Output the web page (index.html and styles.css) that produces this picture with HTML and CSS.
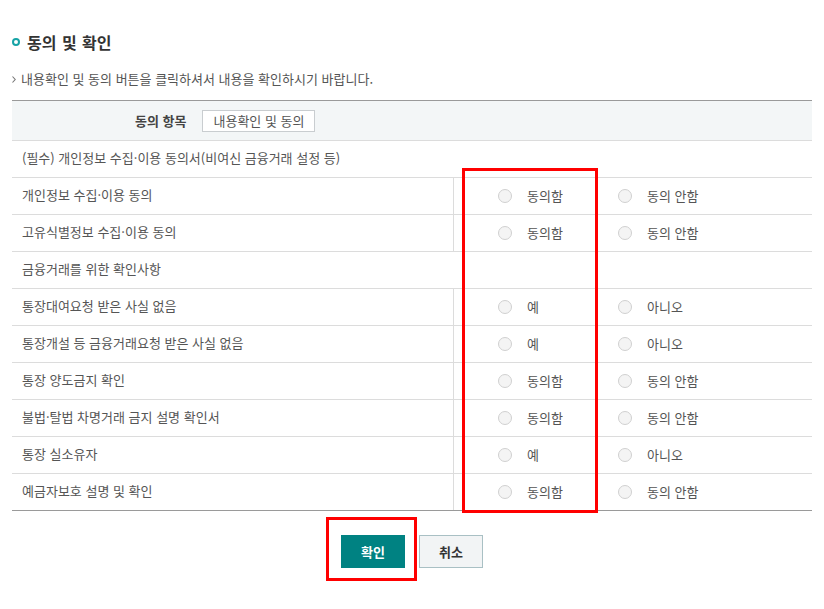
FILE: index.html
```html
<!DOCTYPE html>
<html lang="ko">
<head>
<meta charset="utf-8">
<title>동의 및 확인</title>
<link rel="stylesheet" href="styles.css">
</head>
<body>
<div class="page">
  <h2 class="title"><span class="bullet"></span>동의 및 확인</h2>
  <p class="desc"><svg class="arrow" width="4" height="7" viewBox="0 0 4 7"><path d="M0.5 0.5 L3.2 3.5 L0.5 6.5" fill="none" stroke="#777" stroke-width="1.1"/></svg>내용확인 및 동의 버튼을 클릭하셔서 내용을 확인하시기 바랍니다.</p>

  <div class="table">
    <div class="head">
      <span class="head-label">동의 항목</span>
      <button class="head-btn" type="button">내용확인 및 동의</button>
    </div>
    <div class="row"><div class="cell-full">(필수) 개인정보 수집·이용 동의서(비여신 금융거래 설정 등)</div></div>
    <div class="row">
      <div class="cell-label">개인정보 수집·이용 동의</div>
      <div class="cell-opts"><span class="opt"><span class="radio"></span>동의함</span><span class="opt"><span class="radio"></span>동의 안함</span></div>
    </div>
    <div class="row">
      <div class="cell-label">고유식별정보 수집·이용 동의</div>
      <div class="cell-opts"><span class="opt"><span class="radio"></span>동의함</span><span class="opt"><span class="radio"></span>동의 안함</span></div>
    </div>
    <div class="row"><div class="cell-full">금융거래를 위한 확인사항</div></div>
    <div class="row">
      <div class="cell-label">통장대여요청 받은 사실 없음</div>
      <div class="cell-opts"><span class="opt"><span class="radio"></span>예</span><span class="opt"><span class="radio"></span>아니오</span></div>
    </div>
    <div class="row">
      <div class="cell-label">통장개설 등 금융거래요청 받은 사실 없음</div>
      <div class="cell-opts"><span class="opt"><span class="radio"></span>예</span><span class="opt"><span class="radio"></span>아니오</span></div>
    </div>
    <div class="row">
      <div class="cell-label">통장 양도금지 확인</div>
      <div class="cell-opts"><span class="opt"><span class="radio"></span>동의함</span><span class="opt"><span class="radio"></span>동의 안함</span></div>
    </div>
    <div class="row">
      <div class="cell-label">불법·탈법 차명거래 금지 설명 확인서</div>
      <div class="cell-opts"><span class="opt"><span class="radio"></span>동의함</span><span class="opt"><span class="radio"></span>동의 안함</span></div>
    </div>
    <div class="row">
      <div class="cell-label">통장 실소유자</div>
      <div class="cell-opts"><span class="opt"><span class="radio"></span>예</span><span class="opt"><span class="radio"></span>아니오</span></div>
    </div>
    <div class="row last">
      <div class="cell-label">예금자보호 설명 및 확인</div>
      <div class="cell-opts"><span class="opt"><span class="radio"></span>동의함</span><span class="opt"><span class="radio"></span>동의 안함</span></div>
    </div>
  </div>

  <div class="actions">
    <button class="btn btn-ok" type="button">확인</button>
    <button class="btn btn-cancel" type="button">취소</button>
  </div>

  <div class="mark mark-opts"></div>
  <div class="mark mark-ok"></div>
</div>
</body>
</html>
```

FILE: styles.css
```css
* { box-sizing: border-box; }
html, body { margin: 0; padding: 0; background: #fff; }
body {
  font-family: "Noto Sans CJK KR", "Noto Sans", sans-serif;
  font-size: 13px;
  color: #555;
}
.page {
  position: relative;
  width: 824px;
  min-height: 609px;
  padding: 32px 12px 40px;
}
.title {
  margin: 0;
  height: 20px;
  line-height: 20px;
  font-size: 16px;
  font-weight: bold;
  color: #333;
  display: flex;
  align-items: center;
  word-spacing: 1px;
}
.bullet {
  width: 8px;
  height: 8px;
  border: 2.5px solid #17a3a6;
  border-radius: 50%;
  margin-right: 7px;
}
.desc {
  margin: 19px 0 0;
  height: 16px;
  line-height: 16px;
  display: flex;
  align-items: center;
  color: #555;
}
.arrow { margin-right: 5px; }
.table {
  margin-top: 13px;
  border-top: 1px solid #9a9a9a;
}
.head {
  height: 40px;
  background: #f3f6f7;
  border-bottom: 1px solid #dcdcdc;
  display: flex;
  align-items: center;
  padding-left: 123px;
}
.head-label {
  font-weight: bold;
  color: #444;
  margin-right: 16px;
}
.head-btn {
  width: 113px;
  height: 22px;
  border: 1px solid #c9cdd0;
  background: #fff;
  font-family: inherit;
  font-size: 13px;
  color: #555;
  padding: 0;
}
.row {
  height: 37px;
  border-bottom: 1px solid #dcdcdc;
  display: flex;
}
.row.last { border-bottom-color: #9a9a9a; }
.cell-full, .cell-label {
  display: flex;
  align-items: center;
  padding: 0 0 3px 10px;
}
.cell-full { flex: 1; }
.cell-label { width: 441px; }
.cell-opts {
  flex: 1;
  border-left: 1px solid #dcdcdc;
  display: flex;
  align-items: center;
  padding: 0 0 1px 44px;
}
.opt {
  width: 120px;
  display: inline-flex;
  align-items: center;
}
.radio {
  width: 14px;
  height: 14px;
  border: 1px solid #d0d0d0;
  border-radius: 50%;
  background: #f4f4f4;
  margin-right: 15px;
}
.actions {
  margin-top: 24px;
  display: flex;
  justify-content: center;
  gap: 14px;
}
.btn {
  width: 64px;
  height: 33px;
  font-family: inherit;
  font-size: 13px;
  font-weight: bold;
  padding: 0;
}
.btn-ok {
  background: #008282;
  border: 1px solid #008282;
  color: #fff;
}
.btn-cancel {
  background: #f2f4f5;
  border: 1px solid #a9c0c4;
  color: #333;
}
.mark {
  position: absolute;
  border: 3px solid #ff0000;
}
.mark-opts {
  left: 462px;
  top: 168px;
  width: 136px;
  height: 345px;
}
.mark-ok {
  left: 326px;
  top: 517px;
  width: 91px;
  height: 64px;
}
```
